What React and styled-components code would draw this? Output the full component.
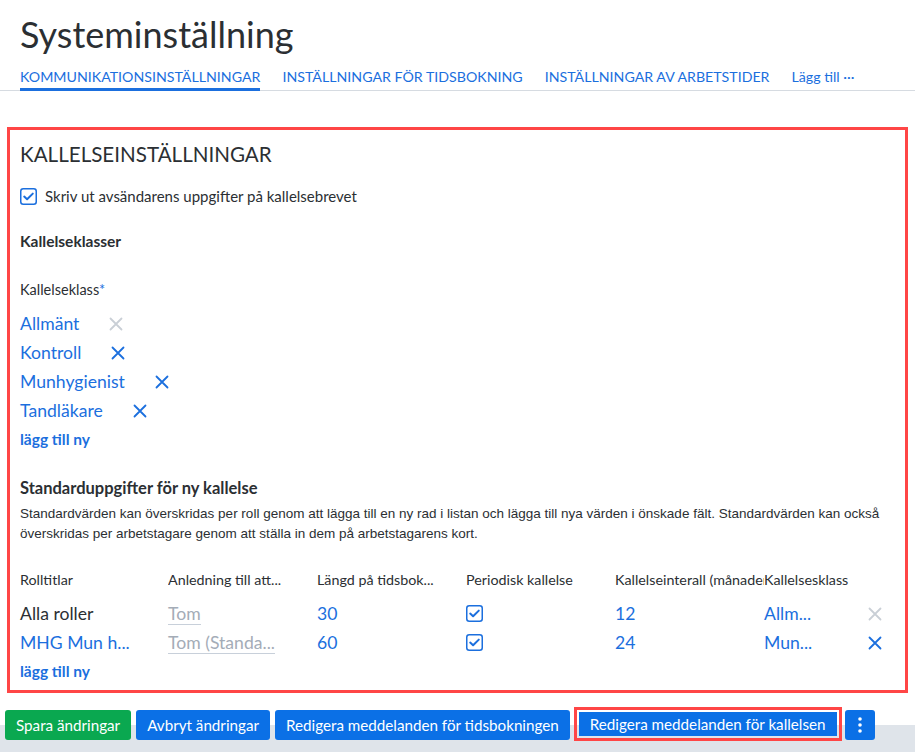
import React from 'react';
import styled, { createGlobalStyle } from 'styled-components';

const BLUE = '#1b6fde';
const BTN_BLUE = '#0b70e6';

const GlobalStyle = createGlobalStyle`
  body {
    margin: 0;
    font-family: Lato, 'Open Sans', sans-serif;
    color: #2b2f33;
    background: #fff;
  }
`;

const Page = styled.div`
  display: flex;
  flex-direction: column;
  width: 915px;
  height: 752px;
  overflow: hidden;
`;

const Header = styled.div`
  padding: 0 20px;
  border-bottom: 1px solid #d6dbe1;
`;

const Title = styled.h1`
  margin: 12px 0 0;
  font-size: 36px;
  font-weight: 400;
  line-height: 44px;
  color: #2b2f33;
`;

const Tabs = styled.div`
  display: flex;
  gap: 22px;
  margin-top: 12px;
`;

const Tab = styled.div`
  font-size: 14.2px;
  line-height: 18px;
  color: ${BLUE};
  text-transform: ${p => (p.$plain ? 'none' : 'uppercase')};
  padding-bottom: 2px;
  border-bottom: 3px solid ${p => (p.$active ? BLUE : 'transparent')};
  margin-bottom: -1px;
  white-space: nowrap;
`;

const Panel = styled.div`
  margin: 36px 7px 0;
  border: 3px solid #ff4646;
  padding: 10px 10px 10px;
`;

const PanelTitle = styled.h2`
  margin: 0;
  font-size: 20.6px;
  font-weight: 400;
  line-height: 28px;
  color: #2b2f33;
`;

const CheckRow = styled.label`
  display: flex;
  align-items: center;
  gap: 8px;
  margin-top: 19px;
  font-size: 15px;
`;

const BoxIcon = styled.span`
  display: inline-flex;
  width: 17px;
  height: 17px;
`;

const SubHeading = styled.div`
  font-size: ${p => p.$size || 15.5}px;
  font-weight: 700;
  color: #2b2f33;
  margin-top: ${p => p.$top || 0}px;
`;

const FieldLabel = styled.div`
  font-size: 14.5px;
  margin-top: 31px;
  span {
    color: ${BLUE};
  }
`;

const ClassList = styled.div`
  display: flex;
  flex-direction: column;
  margin-top: 11px;
`;

const ClassRow = styled.div`
  display: flex;
  align-items: center;
  height: 29px;
  font-size: 17.6px;
  color: ${BLUE};
`;

const RemoveBtn = styled.span`
  display: inline-flex;
  margin-left: ${p => p.$gap ?? 30}px;
  color: ${p => (p.$disabled ? '#c9cfd6' : BLUE)};
`;

const AddLink = styled.div`
  font-size: 15.5px;
  font-weight: 700;
  color: ${BLUE};
  margin-top: ${p => p.$top || 0}px;
`;

const Description = styled.p`
  margin: 6px 0 0;
  font-family: 'Liberation Sans Narrow', 'Liberation Sans', sans-serif;
  font-size: 13.5px;
  line-height: 20px;
  white-space: nowrap;
  color: #2b2f33;
`;

const Grid = styled.div`
  display: grid;
  grid-template-columns: 148px 149px 149px 149px 149px 104px 20px;
  grid-auto-rows: 29px;
  align-items: center;
  margin-top: 26px;
`;

const HeadCell = styled.div`
  font-size: 14.3px;
  color: #2b2f33;
  white-space: nowrap;
  overflow: hidden;
  height: 36px;
  line-height: 20px;
  padding-right: 2px;
  align-self: start;
  grid-column: span ${p => p.$span || 1};
`;

const Cell = styled.div`
  font-size: 17.6px;
  color: ${p => (p.$dark ? '#2b2f33' : BLUE)};
  white-space: nowrap;
  display: flex;
  align-items: center;
`;

const Placeholder = styled.span`
  color: #a4acb7;
  border-bottom: 1px solid #c8d0da;
  line-height: 21px;
`;

const Footer = styled.div`
  display: flex;
  align-items: flex-start;
  gap: 5px;
  margin-top: auto;
  padding: 3px 5px 11px;
  background: linear-gradient(to bottom, #fff 0, #fff 21px, #dfe4ea 21px);
`;

const Button = styled.button`
  height: 30px;
  margin-top: 3px;
  padding: 0 ${p => p.$pad || 11}px;
  border: none;
  border-radius: 3px;
  background: ${p => (p.$green ? '#0aa850' : BTN_BLUE)};
  color: #fff;
  font-family: Lato, 'Open Sans', sans-serif;
  font-size: 15.2px;
  white-space: nowrap;
  display: inline-flex;
  align-items: center;
  justify-content: center;
`;

const Highlight = styled.div`
  border: 3px solid #ff4646;
  padding: 2px;
  margin-left: -1px;
  display: flex;
  ${Button} {
    height: 24px;
    margin-top: 0;
    border-radius: 0;
  }
`;

const Kebab = styled(Button)`
  width: 30px;
  padding: 0;
  margin-left: -2px;
`;

const Check = () => (
  <BoxIcon>
    <svg width="17" height="17" viewBox="0 0 17 17">
      <rect x="0.75" y="0.75" width="15.5" height="15.5" rx="2.5" fill="#fff" stroke={BLUE} strokeWidth="1.5" />
      <path d="M4.2 8.6 L7.1 11.3 L12.8 5.6" fill="none" stroke={BLUE} strokeWidth="2" strokeLinecap="round" strokeLinejoin="round" />
    </svg>
  </BoxIcon>
);

const Cross = () => (
  <svg width="14" height="14" viewBox="0 0 14 14">
    <path d="M1.5 1.5 L12.5 12.5 M12.5 1.5 L1.5 12.5" stroke="currentColor" strokeWidth="1.8" strokeLinecap="round" />
  </svg>
);

const classes = [
  { name: 'Allmänt', disabled: true },
  { name: 'Kontroll' },
  { name: 'Munhygienist' },
  { name: 'Tandläkare' },
];

const rows = [
  { role: 'Alla roller', dark: true, reason: 'Tom', len: '30', interval: '12', cls: 'Allm...', disabled: true },
  { role: 'MHG Mun h...', reason: 'Tom (Standa...', len: '60', interval: '24', cls: 'Mun...' },
];

export default function App() {
  return (
    <Page>
      <GlobalStyle />
      <Header>
        <Title>Systeminställning</Title>
        <Tabs>
          <Tab $active>Kommunikationsinställningar</Tab>
          <Tab>Inställningar för tidsbokning</Tab>
          <Tab>Inställningar av arbetstider</Tab>
          <Tab $plain>Lägg till ···</Tab>
        </Tabs>
      </Header>

      <Panel>
        <PanelTitle>KALLELSEINSTÄLLNINGAR</PanelTitle>
        <CheckRow>
          <Check />
          Skriv ut avsändarens uppgifter på kallelsebrevet
        </CheckRow>
        <SubHeading $top={27}>Kallelseklasser</SubHeading>
        <FieldLabel>
          Kallelseklass<span>*</span>
        </FieldLabel>
        <ClassList>
          {classes.map(c => (
            <ClassRow key={c.name}>
              {c.name}
              <RemoveBtn $disabled={c.disabled}>
                <Cross />
              </RemoveBtn>
            </ClassRow>
          ))}
        </ClassList>
        <AddLink $top={5}>lägg till ny</AddLink>

        <SubHeading $size={16.5} $top={30}>Standarduppgifter för ny kallelse</SubHeading>
        <Description>
          Standardvärden kan överskridas per roll genom att lägga till en ny rad i listan och lägga till nya värden i önskade fält. Standardvärden kan också
          <br />
          överskridas per arbetstagare genom att ställa in dem på arbetstagarens kort.
        </Description>

        <Grid>
          <HeadCell>Rolltitlar</HeadCell>
          <HeadCell>Anledning till att...</HeadCell>
          <HeadCell>Längd på tidsbok...</HeadCell>
          <HeadCell>Periodisk kallelse</HeadCell>
          <HeadCell>Kallelseinterall (månader)</HeadCell>
          <HeadCell $span={2}>Kallelsesklass</HeadCell>
          {rows.map(r => (
            <React.Fragment key={r.role}>
              <Cell $dark={r.dark}>{r.role}</Cell>
              <Cell>
                <Placeholder>{r.reason}</Placeholder>
              </Cell>
              <Cell>{r.len}</Cell>
              <Cell>
                <Check />
              </Cell>
              <Cell>{r.interval}</Cell>
              <Cell>{r.cls}</Cell>
              <Cell>
                <RemoveBtn $gap={0} $disabled={r.disabled}>
                  <Cross />
                </RemoveBtn>
              </Cell>
            </React.Fragment>
          ))}
        </Grid>
        <AddLink $top={5}>lägg till ny</AddLink>
      </Panel>

      <Footer>
        <Button $green>Spara ändringar</Button>
        <Button>Avbryt ändringar</Button>
        <Button>Redigera meddelanden för tidsbokningen</Button>
        <Highlight>
          <Button>Redigera meddelanden för kallelsen</Button>
        </Highlight>
        <Kebab>
          <svg width="4" height="16" viewBox="0 0 4 16">
            <circle cx="2" cy="2" r="1.8" fill="#fff" />
            <circle cx="2" cy="8" r="1.8" fill="#fff" />
            <circle cx="2" cy="14" r="1.8" fill="#fff" />
          </svg>
        </Kebab>
      </Footer>
    </Page>
  );
}
